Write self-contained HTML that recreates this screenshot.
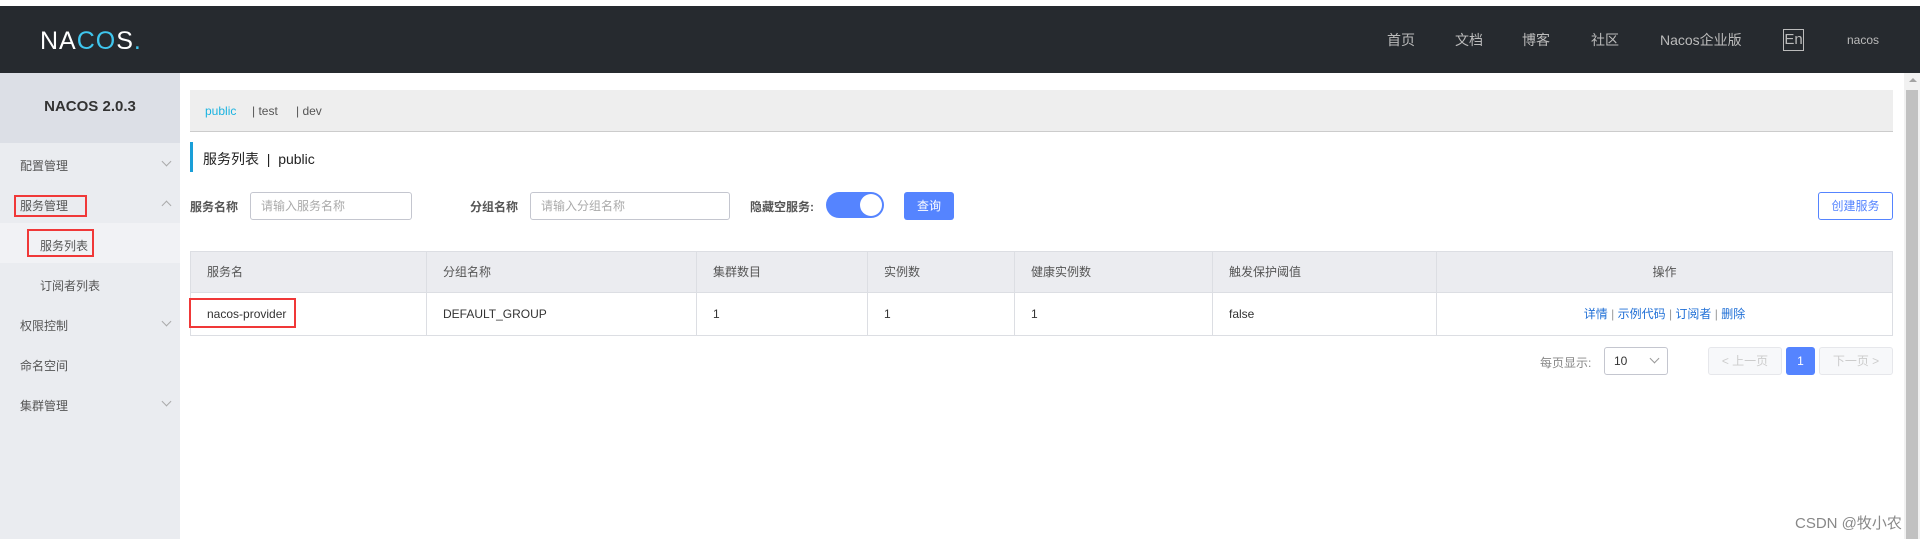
<!DOCTYPE html>
<html><head><meta charset="utf-8"><style>
*{box-sizing:border-box;margin:0;padding:0}
body{width:1920px;height:539px;overflow:hidden;background:#fff;font-family:"Liberation Sans","Noto Sans CJK SC",sans-serif;font-size:12px;color:#333;position:relative}
.a{position:absolute}
.hd{left:0;top:6px;width:1920px;height:67px;background:#262a2f}
.nav{color:#bbb;font-size:14px;top:30px}
.sb{left:0;top:73px;width:180px;height:466px;background:#eaecf0}
.mi{left:20px;font-size:12px;color:#555}
.chev{left:163px;width:7px;height:7px;border-right:1px solid #aaa;border-bottom:1px solid #aaa}
.red{border:2px solid #f03838}
.th{top:251px;height:42px;line-height:42px;font-size:12px;color:#555}
.td{top:293px;height:43px;line-height:43px;font-size:12px;color:#333}
.vl{width:1px;background:#dcdee3}
.inp{height:28px;border:1px solid #c4c6cf;border-radius:3px;color:#aaa;font-size:12px;line-height:26px;padding-left:10px;top:192px}
</style></head><body>
<div class="a hd"></div>
<div class="a" style="left:40px;top:27px;font-size:25px;color:#fff;letter-spacing:1px">NA<span style="color:#3fc6ee">CO</span>S<span style="color:#3fc6ee">.</span></div>
<div class="a nav" style="left:1387px">首页</div>
<div class="a nav" style="left:1455px">文档</div>
<div class="a nav" style="left:1522px">博客</div>
<div class="a nav" style="left:1591px">社区</div>
<div class="a nav" style="left:1660px">Nacos企业版</div>
<div class="a" style="left:1783px;top:29px;width:21px;height:22px;border:1px solid #bbb;color:#bbb;font-size:15px;line-height:20px;text-align:center">En</div>
<div class="a" style="left:1847px;top:33px;color:#bbb;font-size:12px">nacos</div>

<div class="a sb"></div>
<div class="a" style="left:0;top:73px;width:180px;height:70px;background:#dcdfe6"></div>
<div class="a" style="left:0;top:98px;width:180px;text-align:center;font-size:15px;font-weight:bold;color:#333">NACOS 2.0.3</div>
<div class="a mi" style="top:157px">配置管理</div><div class="a chev" style="top:158px;transform:rotate(45deg)"></div>
<div class="a mi" style="top:197px">服务管理</div><div class="a chev" style="top:202px;transform:rotate(-135deg)"></div>
<div class="a red" style="left:14px;top:195px;width:73px;height:22px"></div>
<div class="a" style="left:0;top:223px;width:180px;height:40px;background:#f1f2f5"></div>
<div class="a mi" style="left:40px;top:237px">服务列表</div>
<div class="a red" style="left:27px;top:229px;width:67px;height:28px"></div>
<div class="a mi" style="left:40px;top:277px">订阅者列表</div>
<div class="a mi" style="top:317px">权限控制</div><div class="a chev" style="top:318px;transform:rotate(45deg)"></div>
<div class="a mi" style="top:357px">命名空间</div>
<div class="a mi" style="top:397px">集群管理</div><div class="a chev" style="top:398px;transform:rotate(45deg)"></div>

<div class="a" style="left:190px;top:90px;width:1703px;height:42px;background:#eee;border-bottom:1px solid #ccc"></div>
<div class="a" style="left:205px;top:104px;font-size:12px;color:#1ab3e0">public</div>
<div class="a" style="left:252px;top:104px;font-size:12px;color:#555">| test</div>
<div class="a" style="left:296px;top:104px;font-size:12px;color:#555">| dev</div>

<div class="a" style="left:190px;top:142px;width:3px;height:30px;background:#1a9fd8"></div>
<div class="a" style="left:203px;top:149px;font-size:14px;color:#222">服务列表 &nbsp;| &nbsp;public</div>

<div class="a" style="left:190px;top:198px;font-weight:bold;color:#555">服务名称</div>
<div class="a inp" style="left:250px;width:162px">请输入服务名称</div>
<div class="a" style="left:470px;top:198px;font-weight:bold;color:#555">分组名称</div>
<div class="a inp" style="left:530px;width:200px">请输入分组名称</div>
<div class="a" style="left:750px;top:198px;font-weight:bold;color:#555">隐藏空服务:</div>
<div class="a" style="left:826px;top:192px;width:58px;height:26px;border-radius:13px;background:#5584ff"></div>
<div class="a" style="left:860px;top:194px;width:22px;height:22px;border-radius:11px;background:#fff"></div>
<div class="a" style="left:904px;top:192px;width:50px;height:28px;border-radius:3px;background:#5584ff;color:#fff;text-align:center;line-height:28px">查询</div>
<div class="a" style="left:1818px;top:192px;width:75px;height:28px;border:1px solid #5584ff;border-radius:3px;color:#5584ff;text-align:center;line-height:26px">创建服务</div>

<div class="a" style="left:190px;top:251px;width:1703px;height:42px;background:#ebecf0;border:1px solid #dcdee3"></div>
<div class="a" style="left:190px;top:292px;width:1703px;height:44px;border:1px solid #dcdee3;border-top:none"></div>
<div class="a vl" style="left:426px;top:251px;height:85px"></div>
<div class="a vl" style="left:696px;top:251px;height:85px"></div>
<div class="a vl" style="left:867px;top:251px;height:85px"></div>
<div class="a vl" style="left:1014px;top:251px;height:85px"></div>
<div class="a vl" style="left:1212px;top:251px;height:85px"></div>
<div class="a vl" style="left:1436px;top:251px;height:85px"></div>
<div class="a th" style="left:207px">服务名</div>
<div class="a th" style="left:443px">分组名称</div>
<div class="a th" style="left:713px">集群数目</div>
<div class="a th" style="left:884px">实例数</div>
<div class="a th" style="left:1031px">健康实例数</div>
<div class="a th" style="left:1229px">触发保护阈值</div>
<div class="a th" style="left:1436px;width:457px;text-align:center">操作</div>
<div class="a td" style="left:207px">nacos-provider</div>
<div class="a red" style="left:189px;top:298px;width:107px;height:30px"></div>
<div class="a td" style="left:443px">DEFAULT_GROUP</div>
<div class="a td" style="left:713px">1</div>
<div class="a td" style="left:884px">1</div>
<div class="a td" style="left:1031px">1</div>
<div class="a td" style="left:1229px">false</div>
<div class="a td" style="left:1436px;width:457px;text-align:center;color:#1f6fd6">详情 <span style="color:#999">|</span> 示例代码 <span style="color:#999">|</span> 订阅者 <span style="color:#999">|</span> 删除</div>

<div class="a" style="left:1540px;top:354px;color:#888">每页显示:</div>
<div class="a" style="left:1604px;top:347px;width:64px;height:28px;border:1px solid #c4c6cf;border-radius:3px;line-height:26px;padding-left:9px;color:#333">10</div>
<div class="a" style="left:1651px;top:355px;width:7px;height:7px;border-right:1px solid #999;border-bottom:1px solid #999;transform:rotate(45deg)"></div>
<div class="a" style="left:1708px;top:347px;width:74px;height:28px;border:1px solid #e6e7eb;background:#f7f8fa;border-radius:3px;color:#ccc;text-align:center;line-height:26px">&lt; 上一页</div>
<div class="a" style="left:1786px;top:347px;width:29px;height:28px;background:#5584ff;border-radius:3px;color:#fff;text-align:center;line-height:28px">1</div>
<div class="a" style="left:1819px;top:347px;width:74px;height:28px;border:1px solid #e6e7eb;background:#f7f8fa;border-radius:3px;color:#ccc;text-align:center;line-height:26px">下一页 &gt;</div>

<div class="a" style="left:1904px;top:73px;width:16px;height:466px;background:#f1f1f1"></div>
<div class="a" style="left:1906px;top:90px;width:12px;height:449px;background:#c1c1c1"></div>
<div class="a" style="left:1909px;top:78px;width:0;height:0;border-left:4px solid transparent;border-right:4px solid transparent;border-bottom:4px solid #a3a3a3"></div>
<div class="a" style="left:1795px;top:512px;font-size:15px;color:#888">CSDN @牧小农</div>
</body></html>
